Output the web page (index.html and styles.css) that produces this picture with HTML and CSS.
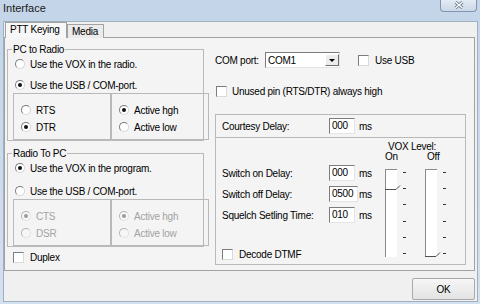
FILE: index.html
```html
<!DOCTYPE html>
<html lang="en">
<head>
    <meta charset="UTF-8">
    <meta name="viewport" content="width=device-width, initial-scale=1.0">
    <title>Interface</title>
    <link rel="stylesheet" href="styles.css">
</head>
<body>
    <div class="window">
        <div class="titlebar">
            <span class="title">Interface</span>
            <div class="close-btn">
                <svg width="10" height="8" viewBox="0 0 10 8">
                    <path class="x-outline" d="M1.5 1 L8.5 7 M8.5 1 L1.5 7"/>
                    <path class="x-inner" d="M1.5 1 L8.5 7 M8.5 1 L1.5 7"/>
                </svg>
            </div>
        </div>

        <div class="client">
            <div class="tabs">
                <div class="tab active">PTT Keying</div>
                <div class="tab">Media</div>
            </div>

            <div class="panel">
                <div class="col-left">
                    <fieldset class="group">
                        <legend>PC to Radio</legend>
                        <div class="opt"><span class="radio"></span>Use the VOX in the radio.</div>
                        <div class="opt"><span class="radio checked"></span>Use the USB / COM-port.</div>
                        <div class="pins">
                            <div class="pinbox">
                                <div class="pin"><span class="radio"></span>RTS</div>
                                <div class="pin"><span class="radio checked"></span>DTR</div>
                            </div>
                            <div class="pinbox">
                                <div class="pin"><span class="radio checked"></span>Active hgh</div>
                                <div class="pin"><span class="radio"></span>Active low</div>
                            </div>
                        </div>
                    </fieldset>

                    <fieldset class="group lower">
                        <legend>Radio To PC</legend>
                        <div class="opt"><span class="radio checked"></span>Use the VOX in the program.</div>
                        <div class="opt"><span class="radio"></span>Use the USB / COM-port.</div>
                        <div class="pins disabled">
                            <div class="pinbox">
                                <div class="pin"><span class="radio checked"></span>CTS</div>
                                <div class="pin"><span class="radio"></span>DSR</div>
                            </div>
                            <div class="pinbox">
                                <div class="pin"><span class="radio checked"></span>Active hgh</div>
                                <div class="pin"><span class="radio"></span>Active low</div>
                            </div>
                        </div>
                    </fieldset>

                    <div class="check-row duplex"><span class="checkbox"></span>Duplex</div>
                </div>

                <div class="col-right">
                    <div class="com-row">
                        <span class="com-label">COM port:</span>
                        <div class="combo">
                            <span>COM1</span>
                            <span class="combo-btn"><span class="arrow"></span></span>
                        </div>
                        <span class="checkbox usb-check"></span>
                        <span class="usb-label">Use USB</span>
                    </div>

                    <div class="check-row unused"><span class="checkbox"></span>Unused pin (RTS/DTR) always high</div>

                    <div class="box courtesy">
                        <span class="field-label">Courtesy Delay:</span>
                        <span class="edit">000</span>
                        <span class="ms">ms</span>
                    </div>

                    <div class="box vox-box">
                        <div class="delays">
                            <div class="delay-row">
                                <span class="field-label">Switch on Delay:</span>
                                <span class="edit">000</span>
                                <span class="ms">ms</span>
                            </div>
                            <div class="delay-row">
                                <span class="field-label">Switch off Delay:</span>
                                <span class="edit wide">0500</span>
                                <span class="ms tight">ms</span>
                            </div>
                            <div class="delay-row">
                                <span class="field-label">Squelch Setling Time:</span>
                                <span class="edit">010</span>
                                <span class="ms">ms</span>
                            </div>
                            <div class="check-row dtmf"><span class="checkbox"></span>Decode DTMF</div>
                        </div>

                        <div class="vox">
                            <div class="vox-title">VOX Level:</div>
                            <div class="sliders">
                                <div class="slider">
                                    <div class="slider-name">On</div>
                                    <div class="slider-body">
                                        <div class="track">
                                            <svg class="thumb" style="top: 14px" width="16" height="6" viewBox="0 0 16 6"><polyline points="0,5.5 11,5.5 15,1.5"/></svg>
                                        </div>
                                        <div class="ticks"><i></i><i></i><i></i><i></i><i></i><i></i></div>
                                    </div>
                                </div>
                                <div class="slider">
                                    <div class="slider-name off">Off</div>
                                    <div class="slider-body">
                                        <div class="track">
                                            <svg class="thumb" style="top: 81px" width="16" height="6" viewBox="0 0 16 6"><polyline points="0,5.5 11,5.5 15,1.5"/></svg>
                                        </div>
                                        <div class="ticks"><i></i><i></i><i></i><i></i><i></i><i></i></div>
                                    </div>
                                </div>
                            </div>
                        </div>
                    </div>
                </div>
            </div>

            <div class="footer">
                <button class="ok-btn">OK</button>
            </div>
        </div>
    </div>
</body>
</html>
```

FILE: styles.css
```css
* {
    box-sizing: border-box;
}
body {
    margin: 0;
    width: 480px;
    height: 304px;
    overflow: hidden;
    font-family: "Liberation Sans", Arial, sans-serif;
    font-size: 10px;
    letter-spacing: -0.25px;
    color: #000;
}
.window {
    width: 480px;
    height: 304px;
    padding: 0 2px 0 3px;
    background: linear-gradient(#c4d5e9, #d3e0ee);
}

/* title bar */
.titlebar {
    height: 21px;
    display: flex;
    justify-content: space-between;
    align-items: flex-start;
}
.title {
    font-size: 11px;
    line-height: 16px;
    letter-spacing: 0;
    color: #1a1a1a;
}
.close-btn {
    width: 37px;
    height: 12px;
    margin-right: 1px;
    border: 1px solid #8196ae;
    border-top: none;
    border-radius: 0 0 4px 4px;
    background: linear-gradient(#e3ebf4, #cbd8e7);
    display: flex;
    justify-content: center;
    align-items: center;
}
.close-btn svg {
    margin-top: -2px;
}
.x-outline {
    stroke: #6f8094;
    stroke-width: 3;
    fill: none;
}
.x-inner {
    stroke: #fff;
    stroke-width: 1.2;
    fill: none;
}

/* client area */
.client {
    width: 475px;
    height: 281px;
    border: 1px solid #9fb0c3;
    background: #f0f0f0;
}
.tabs {
    height: 16px;
    padding-left: 1px;
    display: flex;
    align-items: flex-end;
}
.tab {
    height: 14px;
    padding: 0 4px;
    line-height: 13px;
    border: 1px solid #a2a2a2;
    border-bottom: none;
    background: #ebebeb;
}
.tab.active {
    position: relative;
    z-index: 1;
    width: 62px;
    height: 16px;
    line-height: 13px;
    background: #f7f7f7;
}
.tab + .tab {
    width: 37px;
}
.panel {
    width: 471px;
    height: 234px;
    margin-top: -1px;
    padding-left: 2px;
    border: 1px solid #a2a2a2;
    background: #f4f4f4;
    display: flex;
}

/* left column */
.col-left {
    width: 197px;
}
.group {
    width: 197px;
    min-width: 0;
    margin: 5px 0 0 0;
    padding: 0;
    border: 1px solid #b9b9b9;
}
.group.lower {
    margin-top: 6px;
}
.group legend {
    padding: 0 1px;
    margin-left: 4px;
    line-height: 13px;
    font-size: 10px;
}
.opt {
    height: 16px;
    padding-left: 7px;
    display: flex;
    align-items: center;
    gap: 5px;
}
.opt + .opt {
    margin-top: 5px;
}
.lower .opt + .opt {
    margin-top: 7px;
}
.pins {
    width: 196px;
    margin-left: 5px;
    display: flex;
}
.pinbox {
    width: 98px;
    height: 47px;
    padding: 8px 0 0 7px;
    border: 1px solid #b9b9b9;
}
.pin {
    height: 16px;
    display: flex;
    align-items: center;
    gap: 5px;
}
.pin + .pin {
    margin-top: 1px;
}
.disabled {
    color: #a3a3a3;
}

/* radio and checkbox */
.radio {
    position: relative;
    width: 10px;
    height: 10px;
    flex-shrink: 0;
    border: 1px solid;
    border-color: #7c7c7c #d6d6d6 #d6d6d6 #7c7c7c;
    border-radius: 50%;
    background: #fff;
}
.radio.checked::after {
    content: "";
    position: absolute;
    left: 2px;
    top: 2px;
    width: 4px;
    height: 4px;
    border-radius: 50%;
    background: #111;
}
.disabled .radio {
    border-color: #b4b4b4 #e2e2e2 #e2e2e2 #b4b4b4;
    background: #f6f6f6;
}
.disabled .radio.checked::after {
    background: #9a9a9a;
}
.checkbox {
    width: 11px;
    height: 11px;
    flex-shrink: 0;
    border: 1px solid;
    border-color: #7c7c7c #dadada #dadada #7c7c7c;
    background: #fff;
}
.check-row {
    height: 11px;
    display: flex;
    align-items: center;
    gap: 6px;
}
.duplex {
    margin-top: 5px;
    padding-left: 6px;
}

/* right column */
.col-right {
    width: 251px;
    margin-left: 11px;
}
.com-row {
    height: 16px;
    margin-top: 14px;
    display: flex;
    align-items: center;
}
.com-label {
    width: 50px;
}
.combo {
    width: 75px;
    height: 16px;
    padding-left: 2px;
    border: 1px solid;
    border-color: #7c7c7c #e4e4e4 #e4e4e4 #7c7c7c;
    background: #fff;
    display: flex;
    align-items: center;
    justify-content: space-between;
}
.combo-btn {
    width: 14px;
    height: 12px;
    border: 1px solid;
    border-color: #fff #6f6f6f #6f6f6f #fff;
    background: #ececec;
    display: flex;
    justify-content: center;
    align-items: center;
}
.arrow {
    width: 0;
    height: 0;
    border-left: 3px solid transparent;
    border-right: 3px solid transparent;
    border-top: 3px solid #000;
}
.usb-check {
    margin-left: 18px;
}
.usb-label {
    margin-left: 6px;
}
.unused {
    margin-top: 18px;
    padding-left: 1px;
    gap: 5px;
}
.box {
    border: 1px solid #b9b9b9;
}
.courtesy {
    height: 24px;
    margin-top: 17px;
    padding-left: 6px;
    display: flex;
    align-items: center;
}
.field-label {
    width: 107px;
}
.edit {
    width: 26px;
    height: 16px;
    padding-left: 2px;
    line-height: 14px;
    border: 1px solid;
    border-color: #7c7c7c #e4e4e4 #e4e4e4 #7c7c7c;
    background: #fff;
}
.edit.wide {
    width: 29px;
}
.ms {
    margin-left: 4px;
}
.ms.tight {
    margin-left: 1px;
}
.vox-box {
    height: 128px;
    margin-top: -1px;
    display: flex;
}
.delays {
    width: 171px;
    padding: 27px 0 0 6px;
}
.delay-row {
    height: 16px;
    display: flex;
    align-items: center;
}
.delay-row + .delay-row {
    margin-top: 5px;
}
.dtmf {
    margin-top: 26px;
}

/* VOX level sliders */
.vox {
    padding-top: 4px;
}
.vox-title {
    margin-left: 6px;
    line-height: 10px;
}
.sliders {
    margin-left: 3px;
    display: flex;
}
.slider {
    width: 40px;
}
.slider-name {
    line-height: 10px;
}
.slider-name.off {
    padding-left: 2px;
}
.slider-body {
    margin-top: 7px;
    display: flex;
    align-items: flex-start;
}
.track {
    position: relative;
    width: 12px;
    height: 88px;
    border-left: 1px solid #8a8a8a;
    border-top: 1px solid #8a8a8a;
    background: #fff;
}
.thumb {
    position: absolute;
    left: -1px;
    overflow: visible;
}
.thumb polyline {
    fill: none;
    stroke: #505050;
    stroke-width: 1;
}
.ticks {
    height: 82px;
    margin: 3px 0 0 6px;
    display: flex;
    flex-direction: column;
    justify-content: space-between;
}
.ticks i {
    display: block;
    width: 3px;
    height: 1px;
    background: #333;
}

/* bottom buttons */
.footer {
    margin-top: 7px;
    padding-right: 2px;
    display: flex;
    justify-content: flex-end;
}
.ok-btn {
    width: 63px;
    height: 22px;
    padding: 0;
    border: 1px solid #a9a9a9;
    border-radius: 2px;
    background: linear-gradient(#f6f6f6, #e3e3e3);
    font-family: "Liberation Sans", Arial, sans-serif;
    font-size: 10px;
    letter-spacing: -0.25px;
    color: #000;
}
```
